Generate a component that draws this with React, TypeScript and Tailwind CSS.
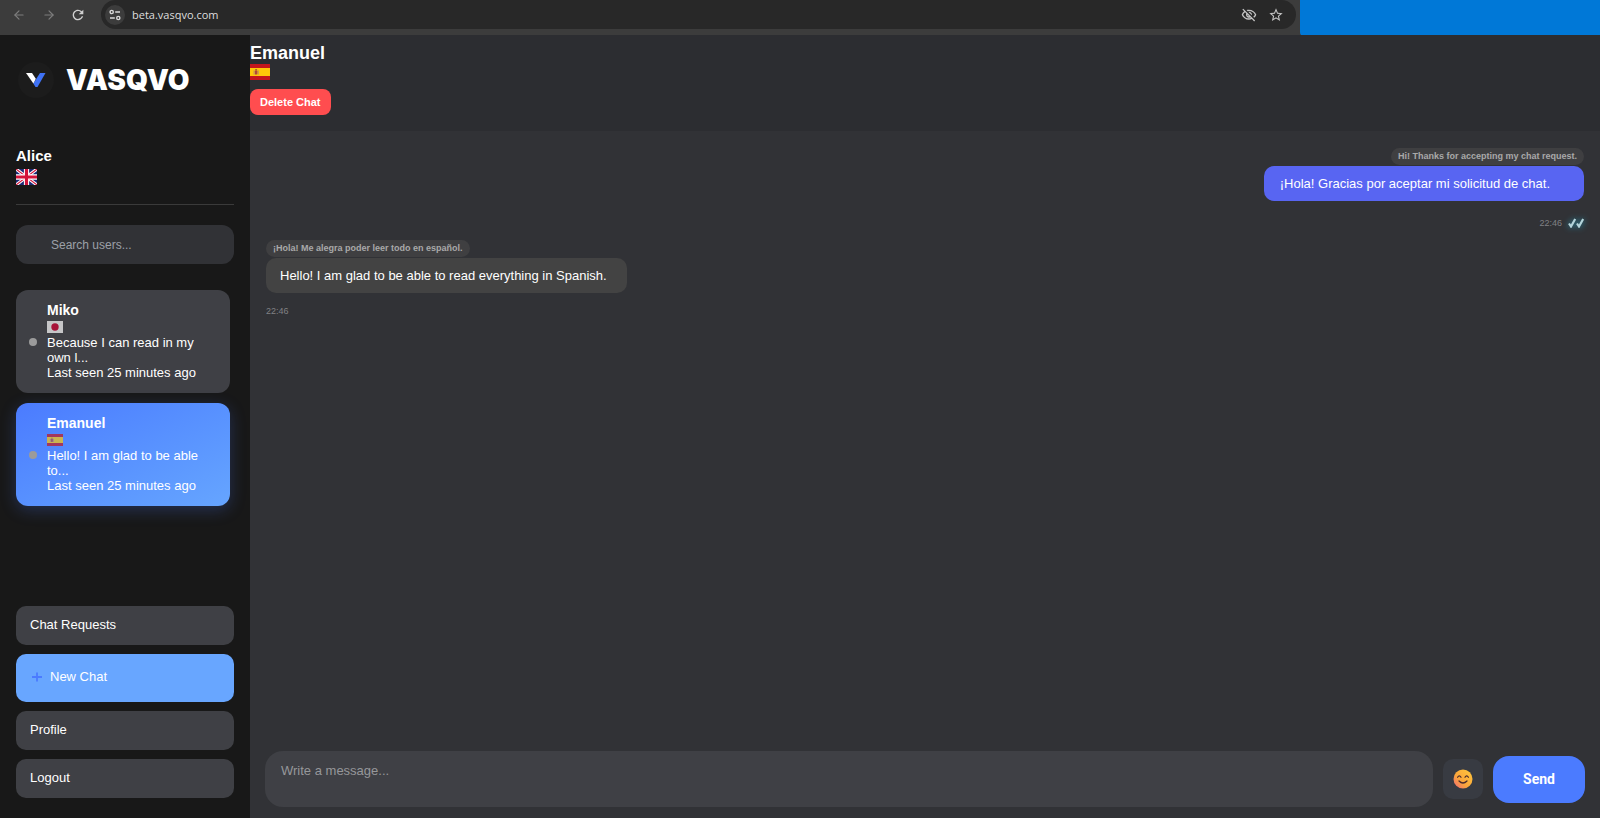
import React, { useState } from 'react';
import { ArrowLeft, ArrowRight } from 'lucide-react';
import { MdRefresh, MdOutlineVisibilityOff, MdStarOutline } from 'react-icons/md';

type Country = 'gb' | 'jp' | 'es';

interface Contact {
  name: string;
  country: Country;
  preview: string;
  lastSeen: string;
}

interface Message {
  original: string;
  text: string;
  time: string;
  sent: boolean;
}

const contacts: Contact[] = [
  { name: 'Miko', country: 'jp', preview: 'Because I can read in my own l...', lastSeen: 'Last seen 25 minutes ago' },
  { name: 'Emanuel', country: 'es', preview: 'Hello! I am glad to be able to...', lastSeen: 'Last seen 25 minutes ago' },
];

const messages: Message[] = [
  {
    original: 'Hi! Thanks for accepting my chat request.',
    text: '¡Hola! Gracias por aceptar mi solicitud de chat.',
    time: '22:46',
    sent: true,
  },
  {
    original: '¡Hola! Me alegra poder leer todo en español.',
    text: 'Hello! I am glad to be able to read everything in Spanish.',
    time: '22:46',
    sent: false,
  },
];

const Flag: React.FC<{ country: Country; className: string }> = ({ country, className }) => {
  if (country === 'jp') {
    return (
      <svg viewBox="0 0 20 15" className={className} role="img" aria-label="Japan">
        <rect width="20" height="15" fill="#fff" />
        <circle cx="10" cy="7.5" r="4.6" fill="#d30035" />
      </svg>
    );
  }
  if (country === 'es') {
    return (
      <svg viewBox="0 0 20 15" preserveAspectRatio="none" className={className} role="img" aria-label="Spain">
        <rect width="20" height="15" fill="#c4161c" />
        <rect y="3.75" width="20" height="7.5" fill="#ffc808" />
        <rect x="3.6" y="6" width="0.9" height="4" fill="#b98a6a" />
        <rect x="7.8" y="6" width="0.9" height="4" fill="#b98a6a" />
        <rect x="4.9" y="5.9" width="2.5" height="4" rx="0.8" fill="#b0473a" />
        <rect x="5.2" y="4.7" width="1.9" height="1" fill="#a5632c" />
      </svg>
    );
  }
  return (
    <svg viewBox="0 0 20 15" preserveAspectRatio="none" className={className} role="img" aria-label="United Kingdom">
      <rect width="20" height="15" fill="#1a2a75" />
      <path d="M0 0L20 15M20 0L0 15" stroke="#fff" strokeWidth="3" />
      <path d="M0 0L20 15M20 0L0 15" stroke="#d3143a" strokeWidth="1" />
      <path d="M10 0V15M0 7.5H20" stroke="#fff" strokeWidth="5" />
      <path d="M10 0V15M0 7.5H20" stroke="#d3143a" strokeWidth="3" />
    </svg>
  );
};

const BrowserBar: React.FC = () => (
  <div className="flex h-[35px] shrink-0 bg-[#3c3c3c]">
    <div className="flex h-[29px] w-[101px] items-center gap-[14px] pl-3 text-[#7d7d7d]">
      <button type="button" aria-label="Back"><ArrowLeft size={14} strokeWidth={2} /></button>
      <button type="button" aria-label="Forward" className="ml-0.5"><ArrowRight size={14} strokeWidth={2} /></button>
      <button type="button" aria-label="Reload" className="text-[#d0d0d0]"><MdRefresh size={16} /></button>
    </div>
    <div className="flex h-[29px] min-w-0 flex-1 items-center rounded-full bg-[#282828] pl-1 pr-3">
      <button
        type="button"
        aria-label="Site information"
        className="flex size-5 items-center justify-center rounded-full bg-[#3c3c3c]"
      >
        <svg viewBox="0 0 12 12" className="size-3" fill="none" stroke="#d8d8d8" strokeWidth="1.4">
          <circle cx="2.7" cy="3" r="1.6" />
          <path d="M6.2 3H11M1 9H5.8" />
          <circle cx="9.3" cy="9" r="1.6" />
        </svg>
      </button>
      <span className="ml-[7px] flex-1 font-['Open_Sans',sans-serif] text-[11px] leading-4 text-[#dedede]">
        beta.vasqvo.com
      </span>
      <div className="flex items-center gap-[11px] text-[#c4c4c4]">
        <button type="button" aria-label="Tracking protection"><MdOutlineVisibilityOff size={16} /></button>
        <button type="button" aria-label="Bookmark"><MdStarOutline size={16} /></button>
      </div>
    </div>
    <div className="ml-1 h-9 w-[300px] rounded-bl-sm bg-[#0078d7]" />
  </div>
);

const Logo: React.FC = () => (
  <div className="flex h-9 items-center gap-3 pl-0.5">
    <span className="flex size-9 items-center justify-center rounded-full bg-[#1c1c1c]">
      <svg viewBox="0 0 20 16" className="h-4 w-5">
        <path d="M14 1H19.5L11.5 15H9.5L7.3 11.6Z" fill="#3f72f5" />
        <path d="M0 1H6L9.8 6.8L7.4 11.6Z" fill="#fff" />
      </svg>
    </span>
    <h1 className="font-[Inter,sans-serif] text-[28px] font-black leading-9 text-white">VASQVO</h1>
  </div>
);

const ContactCard: React.FC<{ contact: Contact; active: boolean; onSelect: () => void }> = ({
  contact,
  active,
  onSelect,
}) => (
  <button
    type="button"
    onClick={onSelect}
    className={`flex w-full items-center gap-[10px] rounded-xl py-[13px] pl-[13px] pr-5 text-left text-[13px] leading-[15px] text-white ${
      active
        ? 'bg-linear-to-br from-[#4b7bff] to-[#66a5ff] shadow-[0_4px_16px_rgba(75,123,255,0.25)]'
        : 'bg-[#3f4045]'
    }`}
  >
    <span className="size-2 shrink-0 rounded-full bg-[#9b9b9b]" />
    <span className="block min-w-0 flex-1">
      <strong className="block text-[14px] leading-[15px]">{contact.name}</strong>
      <span className="flex h-[17px] items-center">
        <Flag country={contact.country} className="h-3 w-4 opacity-70" />
      </span>
      <span className="block">{contact.preview}</span>
      <span className="block">{contact.lastSeen}</span>
    </span>
  </button>
);

const menuButton = 'h-[39px] rounded-[10px] bg-[#3f4045] px-[14px] pb-0.5 text-left text-[13px] leading-4 text-white';

const Sidebar: React.FC<{ selected: string; onSelect: (name: string) => void }> = ({ selected, onSelect }) => (
  <aside className="flex w-[250px] shrink-0 flex-col bg-[#181818] px-4 pb-5 pt-[27px]">
    <Logo />

    <div className="mt-12 border-b border-[#3a3a3a] pb-[19px]">
      <h2 className="text-[15px] font-bold leading-5 text-white">Alice</h2>
      <Flag country="gb" className="mt-[3px] h-4 w-[21px]" />
    </div>

    <input
      type="search"
      aria-label="Search users"
      placeholder="Search users..."
      className="mt-5 h-[39px] w-full rounded-xl bg-[#313236] pl-[35px] pr-3 text-[12px] text-white outline-none placeholder:text-[#9ca0a8]"
    />

    <div className="mt-[26px] flex flex-1 flex-col gap-[10px] pr-1">
      {contacts.map((contact) => (
        <ContactCard
          key={contact.name}
          contact={contact}
          active={contact.name === selected}
          onSelect={() => onSelect(contact.name)}
        />
      ))}
    </div>

    <nav className="mt-6 flex flex-col gap-[9px]">
      <button type="button" className={menuButton}>Chat Requests</button>
      <button
        type="button"
        className="flex h-12 items-center gap-2 rounded-[10px] bg-[#68a6ff] px-4 pb-0.5 text-[13px] leading-4 text-white"
      >
        <svg viewBox="0 0 10 10" className="size-[10px]" stroke="#4b7bff" strokeWidth="1.8">
          <path d="M5 0.5V9.5M0 5H10" />
        </svg>
        New Chat
      </button>
      <button type="button" className={menuButton}>Profile</button>
      <button type="button" className={menuButton}>Logout</button>
    </nav>
  </aside>
);

const DoubleCheck: React.FC = () => (
  <svg
    viewBox="0 0 16 10"
    className="h-[10px] w-4 drop-shadow-[0_0_3px_#22a0c0]"
    fill="none"
    stroke="#b4d4da"
    strokeWidth="2.2"
    role="img"
    aria-label="Read"
  >
    <path d="M1 5.5L3 8.5L7.2 1M9 5.5L11 8.5L15.2 1" />
  </svg>
);

const MessageItem: React.FC<{ message: Message }> = ({ message }) => (
  <li className={`flex flex-col ${message.sent ? 'items-end' : 'items-start'}`}>
    <span className="rounded-full bg-[#3f3f41] px-[7px] text-[9px] font-bold leading-[17px] text-[#a9a9a9]">
      {message.original}
    </span>
    <p
      className={`mt-px rounded-[10px] py-[9px] text-[13px] leading-[17px] text-white ${
        message.sent ? 'bg-[#5865f2] pl-4 pr-[34px]' : 'bg-[#434343] pl-[14px] pr-5'
      }`}
    >
      {message.text}
    </p>
    <span className={`flex items-center gap-1.5 text-[9px] leading-3 text-[#808184] ${message.sent ? 'mt-4' : 'mt-3'}`}>
      {message.time}
      {message.sent && <DoubleCheck />}
    </span>
  </li>
);

const SmileEmoji: React.FC = () => (
  <svg viewBox="0 0 20 20" className="size-5">
    <defs>
      <linearGradient id="smile" x1="1" y1="0" x2="0" y2="1">
        <stop offset="0" stopColor="#ffc83a" />
        <stop offset="0.6" stopColor="#fba53c" />
        <stop offset="1" stopColor="#f0647a" />
      </linearGradient>
    </defs>
    <circle cx="10" cy="10" r="9.5" fill="url(#smile)" />
    <g fill="none" stroke="#4a2b2e" strokeWidth="1.2" strokeLinecap="round">
      <path d="M4.6 8.3Q6.3 5.6 8 8.3M12 8.3Q13.7 5.6 15.4 8.3M6 12Q10 16 14 12" />
    </g>
  </svg>
);

export default function App() {
  const [selected, setSelected] = useState('Emanuel');
  const [draft, setDraft] = useState('');

  return (
    <div className="flex min-h-screen flex-col bg-[#313236] font-['Liberation_Sans',Arial,sans-serif]">
      <BrowserBar />
      <div className="flex flex-1">
        <Sidebar selected={selected} onSelect={setSelected} />

        <main className="flex min-w-0 flex-1 flex-col">
          <header className="flex flex-col items-start bg-[#2c2d31] pb-4 pt-2">
            <h2 className="text-[18px] font-bold leading-5 text-white">{selected}</h2>
            <Flag country={selected === 'Miko' ? 'jp' : 'es'} className="mt-px h-4 w-5" />
            <button
              type="button"
              className="mt-[9px] h-[26px] rounded-lg bg-[#ff4d4f] px-[10px] text-[11px] font-bold leading-4 text-white"
            >
              Delete Chat
            </button>
          </header>

          <ul className="flex flex-1 flex-col gap-[11px] px-4 pt-[17px]">
            {messages.map((message) => (
              <MessageItem key={message.text} message={message} />
            ))}
          </ul>

          <form className="flex items-center gap-[10px] px-[15px] pb-[11px]" onSubmit={(e) => e.preventDefault()}>
            <textarea
              aria-label="Message"
              placeholder="Write a message..."
              value={draft}
              onChange={(e) => setDraft(e.target.value)}
              className="block h-14 min-w-0 flex-1 resize-none rounded-[18px] bg-[#3f4045] px-4 py-3 text-[13px] leading-4 text-white outline-none placeholder:text-[#96979a]"
            />
            <button
              type="button"
              aria-label="Insert emoji"
              className="flex size-10 items-center justify-center rounded-[10px] bg-[#383b42]"
            >
              <SmileEmoji />
            </button>
            <button
              type="submit"
              className="h-[47px] w-[92px] rounded-2xl bg-[#4b7bff] font-[Roboto,sans-serif] text-[14px] font-bold text-white"
            >
              Send
            </button>
          </form>
        </main>
      </div>
    </div>
  );
}
